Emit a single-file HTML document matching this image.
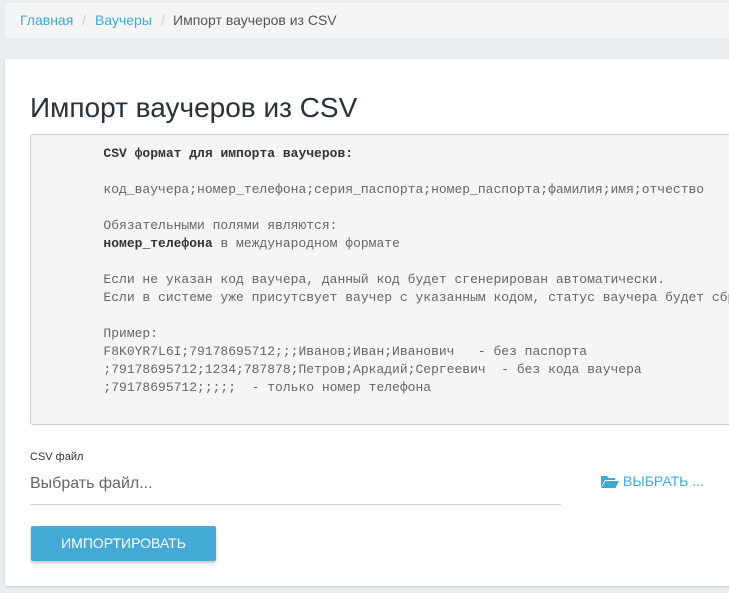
<!DOCTYPE html>
<html><head><meta charset="utf-8"><style>
body{margin:0;background:#e9edf0;width:729px;height:593px;overflow:hidden;font-family:"Liberation Sans",sans-serif;position:relative}
.bc{position:absolute;left:5px;top:3px;width:740px;height:35px;background:#f5f5f5;border-radius:3px;font-size:14px;line-height:35px;color:#555}
.bc span{position:absolute;top:0}
.bc .a{color:#3fa9d6}
.bc .s{color:#ccc}
.card{position:absolute;left:5px;top:59px;width:740px;height:527px;background:#fff;border-radius:2px;box-shadow:0 1px 2px rgba(0,0,0,.15)}
h1{position:absolute;left:30px;top:90px;margin:0;font-weight:normal;font-size:28px;color:#27323c;line-height:36px}
pre{position:absolute;left:30px;top:134px;width:720px;height:291px;margin:0;background:#f5f5f5;border:1px solid #ccc;border-radius:3px;box-sizing:border-box;padding:10px 0 0 10px;font-family:"Liberation Mono",monospace;font-size:13px;line-height:18px;color:#666;overflow:hidden;white-space:pre}
pre b{color:#333}
.lbl{position:absolute;left:30px;top:451px;font-size:11px;color:#333}
.inp{position:absolute;left:30px;top:475px;width:531px;height:29px;border-bottom:1px solid #d2d2d2;font-size:16px;color:#666}
.pick{position:absolute;left:601px;top:473px;font-size:14px;color:#3fa9d6;display:flex;align-items:center;gap:4px}
.btn{position:absolute;left:31px;top:526px;width:185px;height:35px;background:#44aad5;color:#fff;font-size:14px;text-align:center;line-height:35px;border-radius:2px;box-shadow:0 2px 3px rgba(0,0,0,.25)}
</style></head><body>
<div class="bc"><span class="a" style="left:15px">Главная</span><span class="s" style="left:77px">/</span><span class="a" style="left:90px">Ваучеры</span><span class="s" style="left:156px">/</span><span style="left:168px">Импорт ваучеров из CSV</span></div>
<div class="card"></div>
<h1>Импорт ваучеров из CSV</h1>
<pre>        <b>CSV формат для импорта ваучеров:</b>

        код_ваучера;номер_телефона;серия_паспорта;номер_паспорта;фамилия;имя;отчество

        Обязательными полями являются:
        <b>номер_телефона</b> в международном формате

        Если не указан код ваучера, данный код будет сгенерирован автоматически.
        Если в системе уже присутсвует ваучер с указанным кодом, статус ваучера будет сброшен

        Пример:
        F8K0YR7L6I;79178695712;;;Иванов;Иван;Иванович   - без паспорта
        ;79178695712;1234;787878;Петров;Аркадий;Сергеевич  - без кода ваучера
        ;79178695712;;;;;  - только номер телефона</pre>
<div class="lbl">CSV файл</div>
<div class="inp">Выбрать файл...</div>
<div class="pick"><svg width="18" height="14" viewBox="0 0 18 14"><path d="M0 2h6l1.5 2H14v2H4L0 13z" fill="#3fa9d6"/><path d="M4.5 7H18l-3.5 7H0z" fill="#3fa9d6"/></svg>ВЫБРАТЬ ...</div>
<div class="btn">ИМПОРТИРОВАТЬ</div>
</body></html>
